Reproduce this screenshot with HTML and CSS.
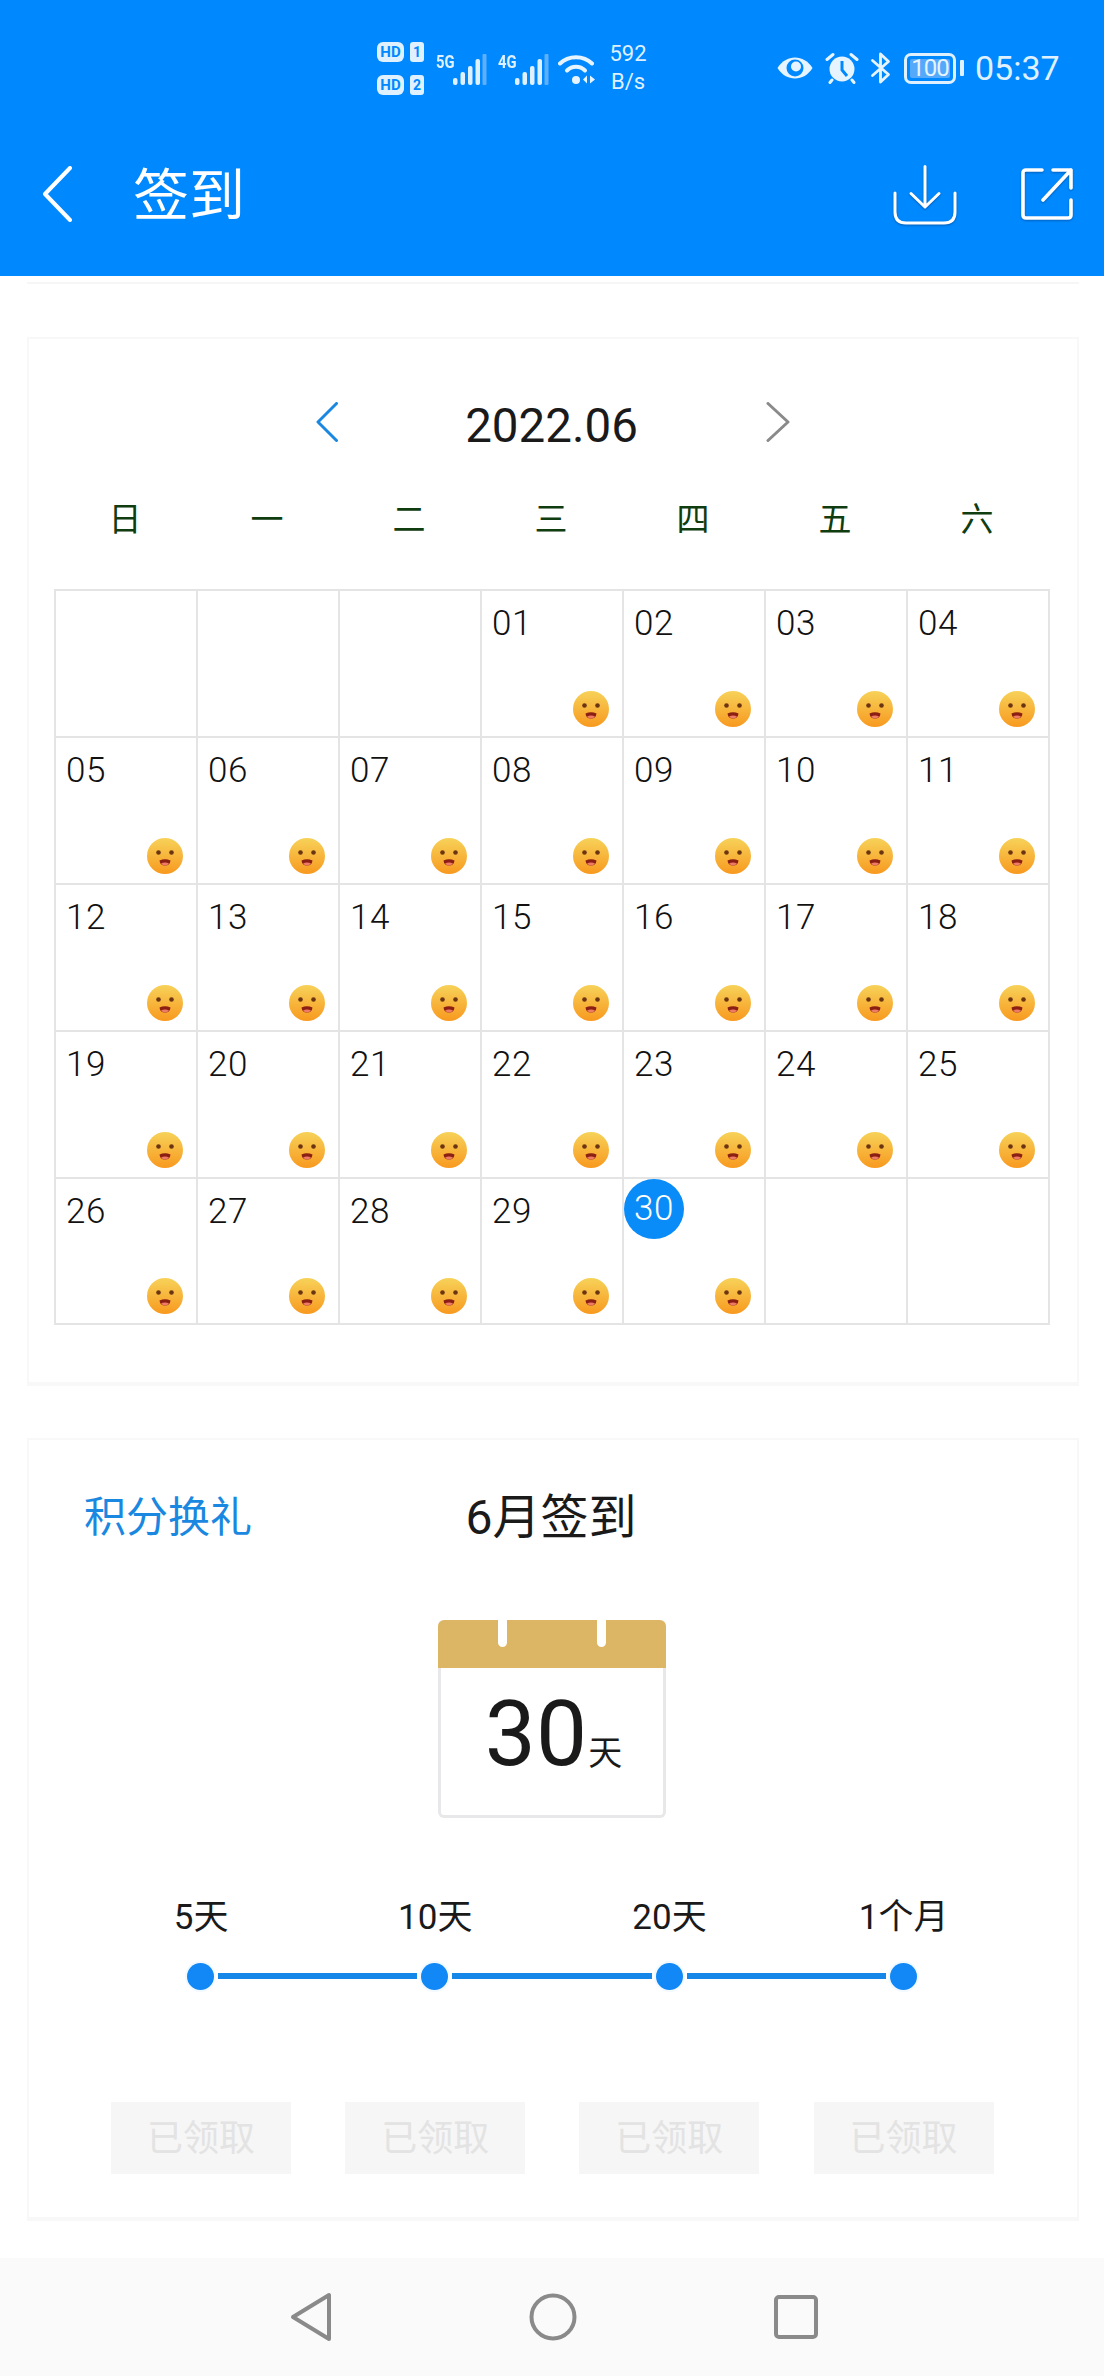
FILE: index.html
```html
<!DOCTYPE html>
<html lang="zh-CN">
<head>
<meta charset="utf-8">
<title>签到</title>
<link rel="stylesheet" href="styles.css">
</head>
<body>
<svg class="defs" width="0" height="0" aria-hidden="true">
  <defs>
    <linearGradient id="faceFill" x1="0" y1="0" x2="0" y2="1">
      <stop offset="0" stop-color="#f7d259"/>
      <stop offset="1" stop-color="#f8991f"/>
    </linearGradient>
    <symbol id="face" viewBox="0 0 36 36">
      <circle cx="18" cy="18" r="18" fill="url(#faceFill)"/>
      <circle cx="11.5" cy="14.5" r="2.3" fill="#6b3512"/>
      <circle cx="24.5" cy="14.5" r="2.3" fill="#6b3512"/>
      <path d="M12.5 22.5Q18 20 23.500 22.500Q23 27.500 18 27.500Q13 27.500 12.500 22.500Z" fill="#8c1f14"/>
      <path d="M14 25.500Q18 23.500 22 25.500Q20.500 27.500 18 27.500Q15.500 27.500 14 25.500Z" fill="#ee7b66"/>
    </symbol>
  </defs>
</svg>

<header class="appbar">
  <div class="status">
    <div class="hd-stack">
      <div class="hd-row"><span class="hd">HD</span><span class="sim-no">1</span></div>
      <div class="hd-row"><span class="hd">HD</span><span class="sim-no">2</span></div>
    </div>
    <div class="signal">
      <span class="net">5G</span>
      <svg width="34" height="31" viewBox="0 0 34 31"><g fill="#dff0ff"><rect x="0" y="24" width="4.500" height="7" rx="2"/><rect x="7.500" y="18" width="4.500" height="13" rx="2"/><rect x="15" y="12" width="4.500" height="19" rx="2"/><rect x="22.500" y="5" width="4.500" height="26" rx="2"/></g><rect x="29.500" y="0" width="4" height="31" rx="1" fill="#5cb0ff"/></svg>
    </div>
    <div class="signal signal-second">
      <span class="net">4G</span>
      <svg width="34" height="31" viewBox="0 0 34 31"><g fill="#dff0ff"><rect x="0" y="24" width="4.500" height="7" rx="2"/><rect x="7.500" y="18" width="4.500" height="13" rx="2"/><rect x="15" y="12" width="4.500" height="19" rx="2"/><rect x="22.500" y="5" width="4.500" height="26" rx="2"/></g><rect x="29.500" y="0" width="4" height="31" rx="1" fill="#5cb0ff"/></svg>
    </div>
    <svg class="wifi" width="38" height="32" viewBox="0 0 38 32"><g fill="none" stroke="#e6f4ff" stroke-width="4" stroke-linecap="round"><path d="M2 10.500C10.500 2 25.500 2 34 10.500"/><path d="M9 17.500C14 12.500 22 12.500 27 17.500"/></g><circle cx="18" cy="27" r="4" fill="#e6f4ff"/><path d="M29 22.500v8l-4-4zM32 22.500v8l5-4z" fill="#e6f4ff"/></svg>
    <div class="speed"><span>592</span><span>B/s</span></div>
    <div class="status-right">
      <svg width="38" height="26" viewBox="0 0 38 26"><path d="M1.500 13C10 -1 28 -1 36.500 13C28 27 10 27 1.500 13Z" fill="#e6f4ff"/><circle cx="19" cy="13" r="8.500" fill="#0089ff"/><circle cx="20" cy="11.500" r="5" fill="#e6f4ff"/></svg>
      <svg class="alarm" width="34" height="32" viewBox="0 0 34 32"><circle cx="17" cy="17" r="12.500" fill="#e6f4ff"/><path d="M17 9v9l5 6" fill="none" stroke="#0089ff" stroke-width="3"/><path d="M2 7.500L8 2.500M32 7.500L26 2.500M7 28L5 30.500M27 28L29 30.500" stroke="#e6f4ff" stroke-width="3" stroke-linecap="round"/></svg>
      <svg class="bt" width="22" height="32" viewBox="0 0 22 32"><path d="M2.500 8.500L18.500 22.500L10.500 30V2L18.500 9.500L2.500 23.500" fill="none" stroke="#e6f4ff" stroke-width="2.800" stroke-linejoin="round" stroke-linecap="round"/></svg>
      <div class="battery"><span class="battery-level">100</span></div>
      <span class="battery-nub"></span>
      <span class="clock">05:37</span>
    </div>
  </div>
  <div class="titlebar">
    <svg class="back" width="30" height="56" viewBox="0 0 30 56"><path d="M28 2L3 28L28 54" fill="none" stroke="#fff" stroke-width="4" stroke-linecap="round" stroke-linejoin="round"/></svg>
    <h1 class="title">签到</h1>
    <svg class="tool" width="64" height="60" viewBox="0 0 64 60"><path d="M32 1.500V41M18 28.500L32 42L46 28.500M2 28V47Q2 58 13 58H51Q62 58 62 47V28" fill="none" stroke="#fff" stroke-width="3" stroke-linecap="round" stroke-linejoin="round"/></svg>
    <svg class="tool tool-share" width="52" height="52" viewBox="0 0 52 52"><path d="M21 2H5Q2 2 2 5V47Q2 50 5 50H47Q50 50 50 47V32M50 2L22 32M32 2H50V20" fill="none" stroke="#fff" stroke-width="3.600" stroke-linecap="round" stroke-linejoin="round"/></svg>
  </div>
</header>

<div class="stub"></div>

<section class="card card-calendar">
  <div class="month-nav">
    <svg width="22" height="40" viewBox="0 0 22 40"><path d="M20.500 1.500L2 20L20.500 38.500" fill="none" stroke="#1a88e0" stroke-width="3" stroke-linecap="round" stroke-linejoin="round"/></svg>
    <span class="month">2022.06</span>
    <svg width="24" height="40" viewBox="0 0 24 40"><path d="M2 1.500L22 20L2 38.500" fill="none" stroke="#8a8a8a" stroke-width="3" stroke-linecap="round" stroke-linejoin="round"/></svg>
  </div>
  <div class="weekdays">
    <span>日</span><span>一</span><span>二</span><span>三</span><span>四</span><span>五</span><span>六</span>
  </div>
  <div class="days">
    <div class="day"></div>
    <div class="day"></div>
    <div class="day"></div>
    <div class="day"><span class="num">01</span><svg class="face"><use href="#face"/></svg></div>
    <div class="day"><span class="num">02</span><svg class="face"><use href="#face"/></svg></div>
    <div class="day"><span class="num">03</span><svg class="face"><use href="#face"/></svg></div>
    <div class="day"><span class="num">04</span><svg class="face"><use href="#face"/></svg></div>
    <div class="day"><span class="num">05</span><svg class="face"><use href="#face"/></svg></div>
    <div class="day"><span class="num">06</span><svg class="face"><use href="#face"/></svg></div>
    <div class="day"><span class="num">07</span><svg class="face"><use href="#face"/></svg></div>
    <div class="day"><span class="num">08</span><svg class="face"><use href="#face"/></svg></div>
    <div class="day"><span class="num">09</span><svg class="face"><use href="#face"/></svg></div>
    <div class="day"><span class="num">10</span><svg class="face"><use href="#face"/></svg></div>
    <div class="day"><span class="num">11</span><svg class="face"><use href="#face"/></svg></div>
    <div class="day"><span class="num">12</span><svg class="face"><use href="#face"/></svg></div>
    <div class="day"><span class="num">13</span><svg class="face"><use href="#face"/></svg></div>
    <div class="day"><span class="num">14</span><svg class="face"><use href="#face"/></svg></div>
    <div class="day"><span class="num">15</span><svg class="face"><use href="#face"/></svg></div>
    <div class="day"><span class="num">16</span><svg class="face"><use href="#face"/></svg></div>
    <div class="day"><span class="num">17</span><svg class="face"><use href="#face"/></svg></div>
    <div class="day"><span class="num">18</span><svg class="face"><use href="#face"/></svg></div>
    <div class="day"><span class="num">19</span><svg class="face"><use href="#face"/></svg></div>
    <div class="day"><span class="num">20</span><svg class="face"><use href="#face"/></svg></div>
    <div class="day"><span class="num">21</span><svg class="face"><use href="#face"/></svg></div>
    <div class="day"><span class="num">22</span><svg class="face"><use href="#face"/></svg></div>
    <div class="day"><span class="num">23</span><svg class="face"><use href="#face"/></svg></div>
    <div class="day"><span class="num">24</span><svg class="face"><use href="#face"/></svg></div>
    <div class="day"><span class="num">25</span><svg class="face"><use href="#face"/></svg></div>
    <div class="day"><span class="num">26</span><svg class="face"><use href="#face"/></svg></div>
    <div class="day"><span class="num">27</span><svg class="face"><use href="#face"/></svg></div>
    <div class="day"><span class="num">28</span><svg class="face"><use href="#face"/></svg></div>
    <div class="day"><span class="num">29</span><svg class="face"><use href="#face"/></svg></div>
    <div class="day day-today"><span class="num">30</span><svg class="face"><use href="#face"/></svg></div>
    <div class="day"></div>
    <div class="day"></div>
  </div>
</section>

<section class="card card-reward">
  <div class="reward-head">
    <a class="reward-link">积分换礼</a>
    <h2 class="reward-title">6月签到</h2>
  </div>
  <div class="tearoff">
    <div class="tearoff-top"><span class="ring"></span><span class="ring"></span></div>
    <div class="tearoff-body"><span class="tearoff-num">30</span><span class="tearoff-unit">天</span></div>
  </div>
  <div class="steps">
    <span>5天</span><span>10天</span><span>20天</span><span>1个月</span>
  </div>
  <div class="track">
    <span class="dot"></span><span class="bar"></span><span class="dot"></span><span class="bar"></span><span class="dot"></span><span class="bar"></span><span class="dot"></span>
  </div>
  <div class="claims">
    <div class="claim">已领取</div><div class="claim">已领取</div><div class="claim">已领取</div><div class="claim">已领取</div>
  </div>
</section>

<nav class="sysnav">
  <svg width="42" height="50" viewBox="0 0 42 50"><path d="M39 3V47L3 25Z" fill="none" stroke="#8a8a8a" stroke-width="4" stroke-linejoin="round"/></svg>
  <svg width="48" height="48" viewBox="0 0 48 48"><circle cx="24" cy="24" r="21.500" fill="none" stroke="#8a8a8a" stroke-width="4"/></svg>
  <svg width="44" height="44" viewBox="0 0 44 44"><rect x="2" y="2" width="40" height="40" rx="3" fill="none" stroke="#8a8a8a" stroke-width="4"/></svg>
</nav>
</body>
</html>
```
FILE: styles.css
```css
* {
  box-sizing: border-box;
}

html,
body {
  margin: 0;
  padding: 0;
}

body {
  width: 1104px;
  height: 2376px;
  overflow: hidden;
  background: #fff;
  color: #1a1a1a;
  font-family: Roboto, "Noto Sans CJK SC", sans-serif;
}

.defs {
  display: block;
  height: 0;
}

/* app bar */
.appbar {
  height: 276px;
  background: #0089ff;
  color: #fff;
}

.status {
  display: flex;
  align-items: center;
  height: 136px;
  padding-left: 377px;
  color: #dff0ff;
}

.hd-stack {
  display: flex;
  flex-direction: column;
  gap: 13px;
}

.hd-row {
  display: flex;
  gap: 6px;
}

.hd,
.sim-no {
  display: flex;
  align-items: center;
  justify-content: center;
  height: 20px;
  background: #dff0ff;
  color: #0089ff;
  font-size: 15px;
  font-weight: 700;
}

.hd {
  width: 27px;
  border-radius: 6px;
}

.sim-no {
  width: 14px;
  border-radius: 3px;
  font-size: 14px;
}

.signal {
  display: flex;
  align-items: flex-start;
  margin-left: 12px;
  margin-top: 2px;
}

.signal-second {
  margin-left: 11px;
}

.net {
  width: 17px;
  font-size: 19px;
  line-height: 16px;
  font-weight: 700;
  transform: scaleX(0.78);
  transform-origin: left top;
}

.wifi {
  margin-left: 9px;
  margin-top: 2px;
}

.speed {
  display: flex;
  flex-direction: column;
  align-items: center;
  width: 40px;
  margin-left: 12px;
  font-size: 22px;
  line-height: 28px;
}

.status-right {
  display: flex;
  align-items: center;
  margin-left: 128px;
}

.alarm {
  margin-left: 11px;
}

.bt {
  margin-left: 11px;
}

.battery {
  width: 52px;
  height: 31px;
  margin-left: 12px;
  padding: 3px;
  border: 3px solid #dff0ff;
  border-radius: 7px;
}

.battery-level {
  display: flex;
  align-items: center;
  justify-content: center;
  height: 100%;
  background: #55a9fb;
  border-radius: 2px;
  color: #e6f4ff;
  font-size: 24px;
  letter-spacing: -1px;
}

.battery-nub {
  width: 4px;
  height: 16px;
  margin-left: 4px;
  border-radius: 1px;
  background: #dff0ff;
}

.clock {
  margin-left: 11px;
  font-size: 34px;
}

.titlebar {
  display: flex;
  align-items: center;
  height: 116px;
  padding: 0 0 0 42px;
}

.title {
  width: 112px;
  margin: 0 0 0 61px;
  font-size: 56px;
  font-weight: 400;
  line-height: 1;
  transform: translateY(2px);
}

.tool {
  margin-left: 648px;
  margin-top: 2px;
  filter: drop-shadow(0 1px 1px rgba(0, 40, 100, 0.45));
}

.tool-share {
  margin-left: 64px;
  margin-top: 0;
}

/* cards */
.stub {
  width: 1052px;
  height: 8px;
  margin-left: 27px;
  border-bottom: 2px solid #f6f6f6;
}

.card {
  width: 1052px;
  margin-left: 27px;
  border: 2px solid #f8f8f8;
  border-bottom-width: 4px;
  background: #fff;
}

.card-calendar {
  height: 1049px;
  margin-top: 53px;
  padding: 0 25px;
}

.month-nav {
  display: flex;
  align-items: center;
  justify-content: center;
  height: 60px;
  margin-top: 53px;
}

.month {
  margin: 0 128px 0 127px;
  font-size: 47.500px;
  line-height: 60px;
  transform: translateY(4px);
}

.weekdays {
  display: grid;
  grid-template-columns: repeat(7, 142px);
  height: 60px;
  margin-top: 38px;
  color: #0f3d0f;
  font-size: 33px;
  line-height: 60px;
  text-align: center;
}

.days {
  display: grid;
  grid-template-columns: repeat(7, 1fr);
  grid-auto-rows: 144.900px;
  gap: 2px;
  width: 996px;
  margin-top: 39px;
  padding: 2px;
  background: #e4e4e4;
}

.day {
  display: flex;
  flex-direction: column;
  padding: 15px 13px 9px 10px;
  background: #fff;
}

.num {
  color: #111;
  font-size: 35px;
  font-weight: 300;
  letter-spacing: 0.6px;
  line-height: 36px;
}

.face {
  width: 36px;
  height: 36px;
  margin-top: auto;
  align-self: flex-end;
}

.day-today {
  padding-top: 0;
  padding-left: 0;
}

.day-today .num {
  display: flex;
  align-items: center;
  justify-content: center;
  width: 60px;
  height: 60px;
  border-radius: 50%;
  background: #0a8cf8;
  color: #fff;
}

/* reward */
.card-reward {
  height: 783px;
  margin-top: 52px;
}

.reward-head {
  display: grid;
  grid-template-columns: 1fr auto 1fr;
  align-items: center;
  height: 60px;
  margin-top: 48px;
  padding-left: 55px;
  padding-right: 59px;
}

.reward-link {
  color: #1a88e0;
  font-size: 42px;
  line-height: 60px;
}

.reward-title {
  margin: 0;
  font-size: 48px;
  font-weight: 400;
  line-height: 60px;
}

.tearoff {
  width: 228px;
  height: 198px;
  margin: 72px 0 0 409px;
}

.tearoff-top {
  display: flex;
  justify-content: center;
  gap: 90px;
  height: 48px;
  border-radius: 6px 6px 0 0;
  background: #dcb665;
}

.ring {
  width: 9px;
  height: 27px;
  border-radius: 0 0 5px 5px;
  background: #fff;
}

.tearoff-body {
  display: flex;
  align-items: baseline;
  justify-content: center;
  height: 150px;
  padding-top: 11px;
  padding-left: 3px;
  border: 3px solid #e8e8ea;
  border-top: 0;
  border-radius: 0 0 6px 6px;
}

.tearoff-num {
  font-size: 91px;
  line-height: 110px;
}

.tearoff-unit {
  margin-left: 1px;
  font-size: 34px;
}

.steps,
.claims {
  display: grid;
  grid-template-columns: repeat(4, 234.200px);
  margin-left: 55px;
}

.steps {
  height: 50px;
  margin-top: 75px;
  font-size: 35px;
  line-height: 50px;
  text-align: center;
}

.track {
  display: flex;
  align-items: center;
  gap: 4px;
  width: 730px;
  height: 30px;
  margin: 18px 0 0 158px;
}

.dot {
  flex: none;
  width: 27px;
  height: 27px;
  border-radius: 50%;
  background: #1188f5;
  box-shadow: 0 0 0 2px #f2f9ff;
}

.bar {
  flex: 1;
  height: 6px;
  background: #1487e8;
}

.claims {
  margin-top: 111px;
}

.claim {
  width: 180px;
  height: 72px;
  margin-left: 27px;
  background: #f6f6f6;
  color: #e3e3e3;
  font-size: 36px;
  line-height: 74px;
  text-align: center;
}

/* system nav */
.sysnav {
  display: flex;
  align-items: center;
  height: 118px;
  margin-top: 37px;
  padding: 0 0 0 290px;
  gap: 197px;
  background: #fafafa;
}
```
